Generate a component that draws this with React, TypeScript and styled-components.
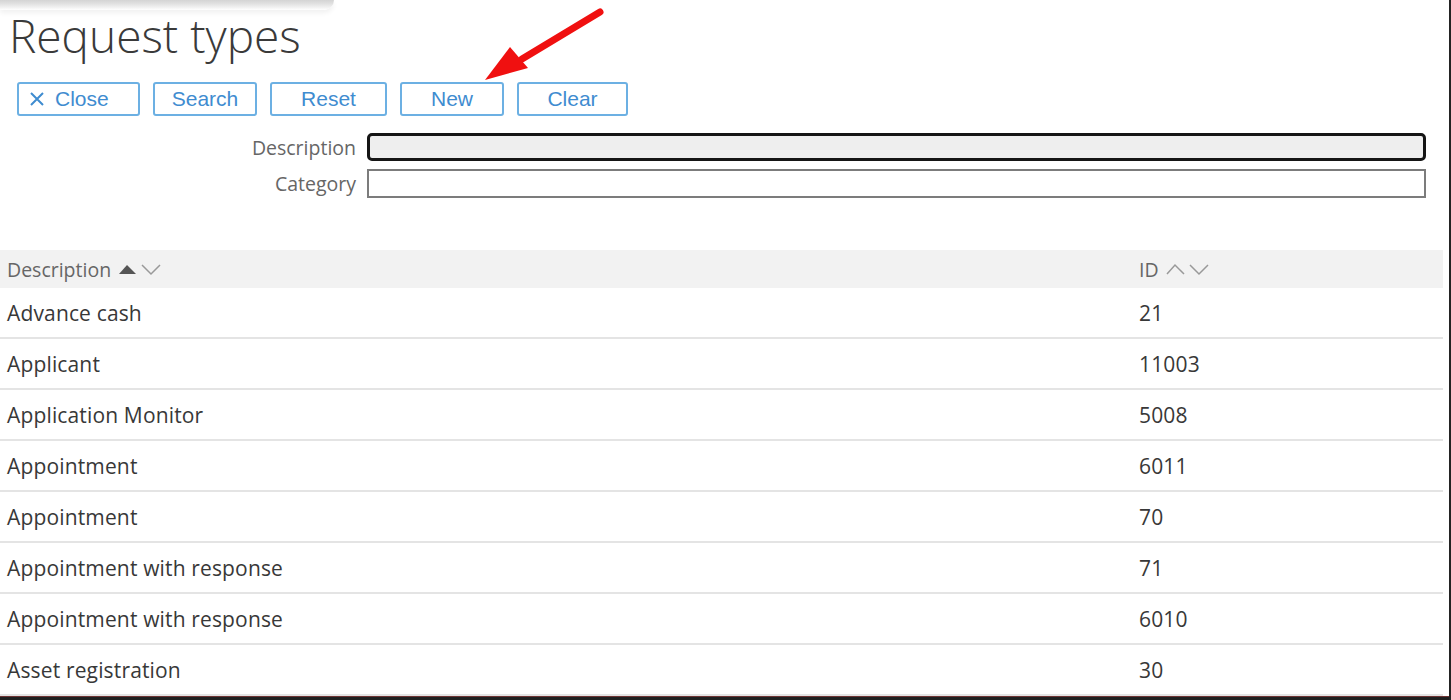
import React from 'react';
import styled, { createGlobalStyle } from 'styled-components';

const GlobalStyle = createGlobalStyle`
  html, body {
    margin: 0;
    padding: 0;
    background: #ffffff;
  }
  body {
    font-family: "Open Sans", "Liberation Sans", sans-serif;
    color: #333;
  }
`;

const Screen = styled.div`
  position: relative;
  width: 1451px;
  height: 700px;
  box-sizing: border-box;
  border-right: 2px solid #232323;
  overflow: hidden;
  display: flex;
  flex-direction: column;
`;

const TopShade = styled.div`
  height: 10px;
  width: 334px;
  background: linear-gradient(to bottom, #d4d4d4 0%, #e2e2e2 40%, #f2f2f2 75%, #ffffff 100%);
  border-bottom-right-radius: 14px;
  box-shadow: 0 3px 5px rgba(0, 0, 0, 0.06);
`;

const Title = styled.h1`
  margin: 0;
  padding-left: 9px;
  font-size: 46px;
  line-height: 50px;
  font-weight: 300;
  color: #3a3a3a;
`;

const Toolbar = styled.div`
  display: flex;
  gap: 13px;
  margin-top: 22px;
  padding-left: 17px;
`;

interface ButtonProps {
  w: number;
  lead?: boolean;
}
const ToolButton = styled.button<ButtonProps>`
  display: flex;
  align-items: center;
  justify-content: ${({ lead }) => (lead ? 'flex-start' : 'center')};
  gap: 10px;
  width: ${({ w }) => w}px;
  height: 34px;
  box-sizing: border-box;
  background: #fff;
  border: 2px solid #6cb0e3;
  border-radius: 3px;
  color: #3f8cd0;
  font-family: "Liberation Sans", Arial, sans-serif;
  font-size: 21px;
  padding: 0 0 0 ${({ lead }) => (lead ? '10px' : '0')};
  cursor: pointer;
`;

const Form = styled.div`
  display: grid;
  grid-template-columns: 356px 1fr;
  column-gap: 11px;
  row-gap: 8px;
  margin-top: 17px;
  padding-right: 23px;
  align-items: center;
`;

const Label = styled.label`
  text-align: right;
  font-size: 19.5px;
  color: #666;
`;

interface FieldProps {
  focused?: boolean;
}
const Field = styled.input<FieldProps>`
  box-sizing: border-box;
  height: ${({ focused }) => (focused ? '28px' : '29px')};
  width: 100%;
  margin: 0;
  background: ${({ focused }) => (focused ? '#eeeeee' : '#ffffff')};
  border: ${({ focused }) => (focused ? '3px solid #151515' : '2px solid #7c7c7c')};
  border-radius: ${({ focused }) => (focused ? '5px' : '0')};
  outline: none;
`;

const Table = styled.div`
  margin-top: 52px;
  width: 1443px;
  display: flex;
  flex-direction: column;
`;

const HeaderRow = styled.div`
  display: grid;
  grid-template-columns: 1132px 1fr;
  height: 38px;
  align-items: center;
  padding-left: 7px;
  background: #f2f2f2;
  font-size: 19.5px;
  color: #666;
`;

const HeaderCell = styled.div`
  display: flex;
  align-items: center;
  gap: 6px;
`;

const Row = styled.div`
  display: grid;
  grid-template-columns: 1132px 1fr;
  height: 51px;
  box-sizing: border-box;
  align-items: center;
  padding-left: 7px;
  border-bottom: 2px solid #e4e4e4;
  font-size: 21px;
  letter-spacing: 0.15px;
  color: #383838;
`;

const Footer = styled.div`
  flex: 1;
  background: #1f1f1f;
  border-top: 1px solid #6e3434;
`;

const ArrowLayer = styled.svg`
  position: absolute;
  left: 470px;
  top: 0;
  pointer-events: none;
`;

const CloseIcon = () => (
  <svg width="16" height="16" viewBox="0 0 16 16">
    <path d="M2 2 L14 14 M14 2 L2 14" stroke="#3f8cd0" strokeWidth="2" fill="none" />
  </svg>
);

const SortIcons = ({ active }: { active: boolean }) => (
  <svg width="46" height="14" viewBox="0 0 46 14">
    {active ? (
      <path d="M2 12 L10 3 L19 12 Z" fill="#555" />
    ) : (
      <path d="M2 12 L10 3 L19 12" stroke="#999" strokeWidth="1.5" fill="none" />
    )}
    <path d="M25 3 L34 12 L43 3" stroke="#999" strokeWidth="1.5" fill="none" />
  </svg>
);

const rows: [string, string][] = [
  ['Advance cash', '21'],
  ['Applicant', '11003'],
  ['Application Monitor', '5008'],
  ['Appointment', '6011'],
  ['Appointment', '70'],
  ['Appointment with response', '71'],
  ['Appointment with response', '6010'],
  ['Asset registration', '30'],
];

const App = () => {
  return (
    <Screen>
      <GlobalStyle />
      <TopShade />
      <Title>Request types</Title>
      <Toolbar>
        <ToolButton w={123} lead>
          <CloseIcon />
          Close
        </ToolButton>
        <ToolButton w={104}>Search</ToolButton>
        <ToolButton w={117}>Reset</ToolButton>
        <ToolButton w={104}>New</ToolButton>
        <ToolButton w={111}>Clear</ToolButton>
      </Toolbar>
      <Form>
        <Label>Description</Label>
        <Field focused />
        <Label>Category</Label>
        <Field />
      </Form>
      <Table>
        <HeaderRow>
          <HeaderCell>
            Description <SortIcons active />
          </HeaderCell>
          <HeaderCell>
            ID <SortIcons active={false} />
          </HeaderCell>
        </HeaderRow>
        {rows.map(([desc, id], i) => (
          <Row key={i}>
            <div>{desc}</div>
            <div>{id}</div>
          </Row>
        ))}
      </Table>
      <Footer />
      <ArrowLayer width="140" height="90" viewBox="0 0 140 90">
        <path d="M130 12 L52 59" stroke="#f01010" strokeWidth="7" strokeLinecap="round" />
        <path d="M15 80 L40 47 L58 68 Z" fill="#f01010" />
      </ArrowLayer>
    </Screen>
  );
};

export default App;
